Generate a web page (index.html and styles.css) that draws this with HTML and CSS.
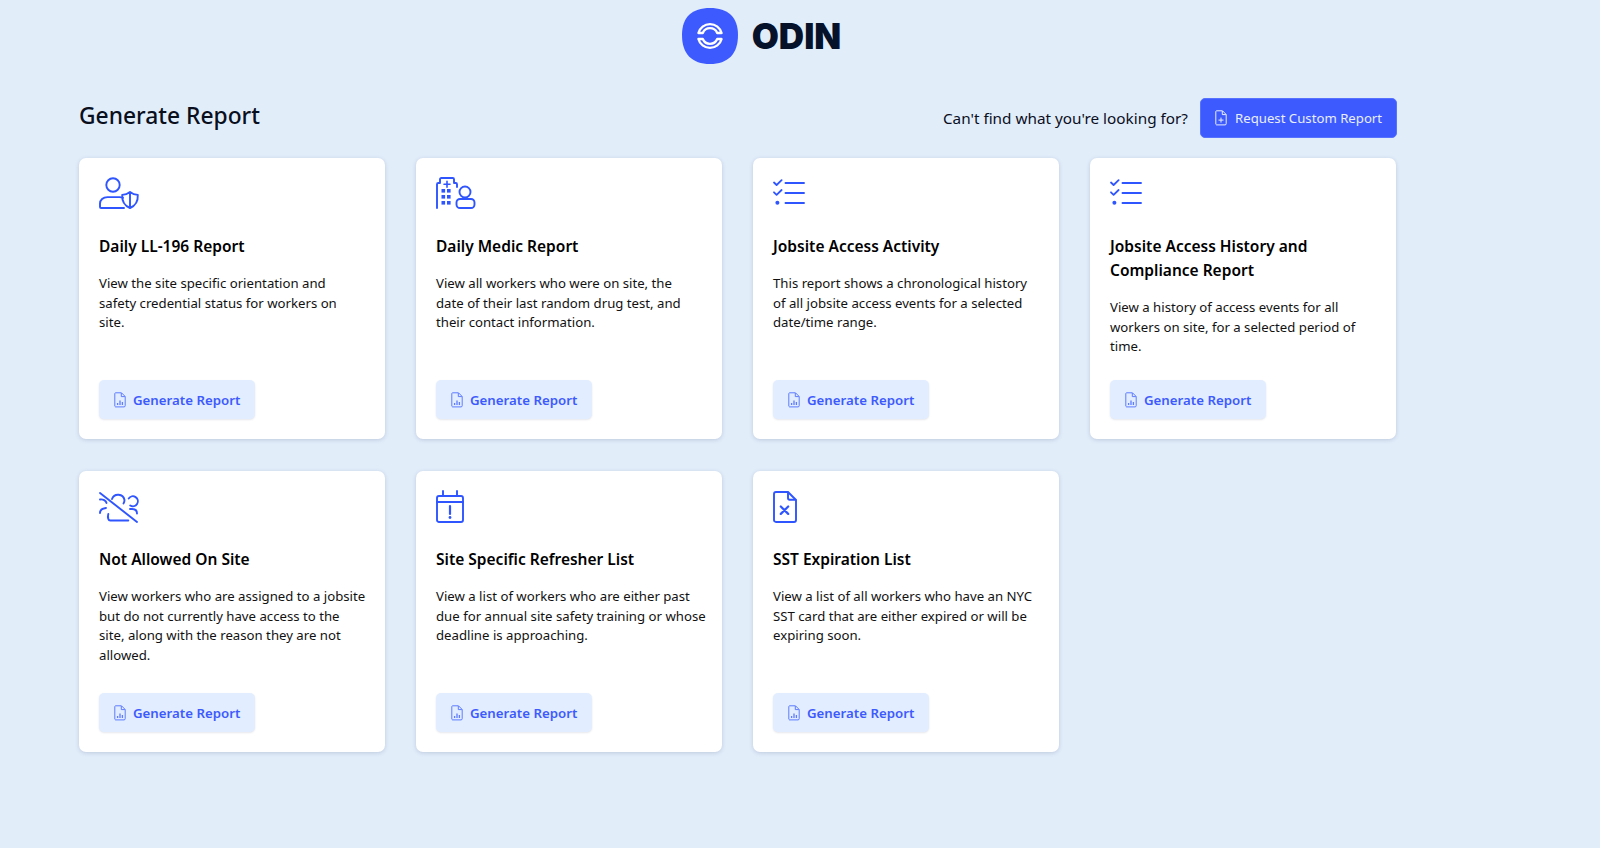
FILE: index.html
```html
<!DOCTYPE html>
<html lang="en">
<head>
<meta charset="utf-8">
<title>ODIN - Generate Report</title>
<link rel="stylesheet" href="styles.css">
</head>
<body>
<svg class="defs" width="0" height="0" aria-hidden="true">
  <defs>
    <symbol id="doc" viewBox="0 0 12 16">
      <path d="M1.500.8h6l3.700 3.700v9.200a1.200 1.200 0 0 1-1.200 1.200H1.500A1.200 1.200 0 0 1 .8 14V1.500c0-.4.3-.7.7-.7Z" fill="none" stroke="currentColor" stroke-width="1"/>
      <path d="M7.300 1v3.600h3.600" fill="none" stroke="currentColor" stroke-width="1"/>
      <path d="M3.600 13v-2M6 13V8.500M8.400 13v-3" fill="none" stroke="currentColor" stroke-width="1.300"/>
    </symbol>
    <symbol id="checks" viewBox="0 0 34 26">
      <g fill="none" stroke="#2f55ff" stroke-width="1.800" stroke-linecap="round" stroke-linejoin="round">
        <path d="M1 3.500 3.600 6 8.600 1.200M1 13.300l2.600 2.500 5-4.800"/>
        <path d="M12.500 4h18.500M12.500 14h18.500M12.500 24h18.500" stroke-width="1.900"/>
      </g>
      <circle cx="4.400" cy="23.800" r="2" fill="#2f55ff"/>
    </symbol>
  </defs>
</svg>

<header class="brand">
  <svg class="logo" viewBox="0 0 56 56" aria-hidden="true">
    <path d="M28 0C46 0 56 9 56 27C56 46 46 56 28 56C10 56 0 46 0 27C0 9 10 0 28 0Z" fill="#3d5afe"/>
    <g fill="none" stroke="#fff" stroke-width="2.300" stroke-linejoin="round">
      <path d="M16.400 25A12 12 0 0 1 39.600 25H35.200A7.800 7.800 0 0 0 20.800 25Z"/>
      <path d="M16.400 31A12 12 0 0 0 39.600 31H35.200A7.800 7.800 0 0 1 20.800 31Z"/>
    </g>
  </svg>
  <span class="wordmark">ODIN</span>
</header>

<main class="content">
  <div class="toolbar">
    <h1 class="page-title">Generate Report</h1>
    <div class="request">
      <span class="request-label">Can't find what you're looking for?</span>
      <button class="btn-primary" type="button">
        <svg class="btn-icon-lg" viewBox="0 0 12 16" aria-hidden="true">
          <path d="M1.500.8h6l3.700 3.700v9.200a1.200 1.200 0 0 1-1.200 1.200H1.500A1.200 1.200 0 0 1 .8 14V1.500c0-.4.3-.7.7-.7Z" fill="none" stroke="currentColor"/>
          <path d="M7.300 1v3.600h3.600M6 7.600v5M3.500 10.100h5" fill="none" stroke="currentColor"/>
        </svg>
        Request Custom Report
      </button>
    </div>
  </div>

  <section class="grid">
    <article class="card">
      <svg class="card-icon" viewBox="0 0 42 34" aria-hidden="true">
        <g fill="none" stroke="#2f55ff" stroke-width="1.900" stroke-linejoin="round" stroke-linecap="round">
          <circle cx="14" cy="8" r="6.700"/>
          <path d="M24 20.800c-1-.5-2.200-.7-3.500-.7H8.500C4 20.100 1 23 1 26.500v3.500c0 .6.400 1 1 1h23"/>
          <path d="M31 15c2.300 1.800 4.800 2.700 7.800 2.900.3 6-1.900 10.700-7.800 13.100-5.900-2.400-8.100-7.100-7.800-13.100 3-.2 5.500-1.100 7.800-2.900ZM31 15.500v15"/>
        </g>
      </svg>
      <h2 class="card-title">Daily LL-196 Report</h2>
      <p class="card-text">View the site specific orientation and<br>safety credential status for workers on<br>site.</p>
      <button class="btn-soft" type="button"><svg class="btn-icon"><use href="#doc"/></svg>Generate Report</button>
    </article>

    <article class="card">
      <svg class="card-icon" viewBox="0 0 42 34" aria-hidden="true">
        <g fill="none" stroke="#2f55ff" stroke-width="1.900" stroke-linejoin="round" stroke-linecap="round">
          <path d="M1 31V7.300C1 6.500 1.500 6 2.300 6H4V2.300C4 1.500 4.500 1 5.300 1h11.400c.8 0 1.300.5 1.300 1.300V6h1.700c.8 0 1.300.5 1.300 1.300V10"/>
          <path d="M11 4.200v6M8 7.200h6" stroke-width="1.600"/>
          <circle cx="29" cy="15" r="5.500"/>
          <rect x="20.500" y="22" width="18" height="9" rx="3.500"/>
        </g>
        <g fill="#2f55ff">
          <rect x="5.500" y="12" width="3.600" height="3.600"/><rect x="11" y="12" width="3.600" height="3.600"/>
          <rect x="5.500" y="18" width="3.600" height="3.600"/><rect x="11" y="18" width="3.600" height="3.600"/>
          <rect x="5.500" y="24" width="3.600" height="3.600"/><rect x="11" y="24" width="3.600" height="3.600"/>
        </g>
      </svg>
      <h2 class="card-title">Daily Medic Report</h2>
      <p class="card-text">View all workers who were on site, the<br>date of their last random drug test, and<br>their contact information.</p>
      <button class="btn-soft" type="button"><svg class="btn-icon"><use href="#doc"/></svg>Generate Report</button>
    </article>

    <article class="card">
      <svg class="card-icon-list"><use href="#checks"/></svg>
      <h2 class="card-title">Jobsite Access Activity</h2>
      <p class="card-text">This report shows a chronological history<br>of all jobsite access events for a selected<br>date/time range.</p>
      <button class="btn-soft" type="button"><svg class="btn-icon"><use href="#doc"/></svg>Generate Report</button>
    </article>

    <article class="card">
      <svg class="card-icon-list"><use href="#checks"/></svg>
      <h2 class="card-title">Jobsite Access History and Compliance Report</h2>
      <p class="card-text">View a history of access events for all<br>workers on site, for a selected period of<br>time.</p>
      <button class="btn-soft" type="button"><svg class="btn-icon"><use href="#doc"/></svg>Generate Report</button>
    </article>

    <article class="card">
      <svg class="card-icon" viewBox="0 0 42 34" aria-hidden="true">
        <g fill="none" stroke="#2f55ff" stroke-width="1.900" stroke-linecap="round" stroke-linejoin="round">
          <path d="M1 3l37 29"/>
          <path d="M13 9a6.500 6.500 0 0 1 12.500 1c0 1.500-.3 2.500-1 3.500"/>
          <path d="M29.700 8.500a5 5 0 1 1 1.500 7"/>
          <path d="M31 19h2c3 0 5 1.800 5 4.500"/>
          <path d="M1 9.500c3-.5 6 1 6.500 3.500"/>
          <path d="M1 23c0-2.500 2-4.500 6-5"/>
          <path d="M9.300 24c-.3 1-.3 4 0 5 .3 1 1 1.500 2 1.500h18"/>
        </g>
      </svg>
      <h2 class="card-title">Not Allowed On Site</h2>
      <p class="card-text">View workers who are assigned to a jobsite<br>but do not currently have access to the<br>site, along with the reason they are not<br>allowed.</p>
      <button class="btn-soft" type="button"><svg class="btn-icon"><use href="#doc"/></svg>Generate Report</button>
    </article>

    <article class="card">
      <svg class="card-icon" viewBox="0 0 42 34" aria-hidden="true">
        <g fill="none" stroke="#2f55ff" stroke-width="1.900" stroke-linecap="round" stroke-linejoin="round">
          <rect x="1" y="6" width="26" height="26" rx="2"/>
          <path d="M1 12h26M7 1v5M21 1v5"/>
          <path d="M14 16v8" stroke-width="2.200"/>
        </g>
        <circle cx="14" cy="27.500" r="1.400" fill="#2f55ff"/>
      </svg>
      <h2 class="card-title">Site Specific Refresher List</h2>
      <p class="card-text">View a list of workers who are either past<br>due for annual site safety training or whose<br>deadline is approaching.</p>
      <button class="btn-soft" type="button"><svg class="btn-icon"><use href="#doc"/></svg>Generate Report</button>
    </article>

    <article class="card">
      <svg class="card-icon" viewBox="0 0 42 34" aria-hidden="true">
        <g fill="none" stroke="#2f55ff" stroke-width="1.900" stroke-linecap="round" stroke-linejoin="round">
          <path d="M3 2h12l8 8v20c0 1.200-.8 2-2 2H3c-1.200 0-2-.8-2-2V4c0-1.200.8-2 2-2Z"/>
          <path d="M15 2.500V8c0 1 .7 1.700 1.700 1.700h5.800"/>
          <path d="M7.800 16.500l7.400 7.400M15.200 16.500l-7.400 7.400" stroke-width="2.200"/>
        </g>
      </svg>
      <h2 class="card-title">SST Expiration List</h2>
      <p class="card-text">View a list of all workers who have an NYC<br>SST card that are either expired or will be<br>expiring soon.</p>
      <button class="btn-soft" type="button"><svg class="btn-icon"><use href="#doc"/></svg>Generate Report</button>
    </article>
  </section>
</main>
</body>
</html>
```

FILE: styles.css
```css
* { box-sizing: border-box; }
html, body { margin: 0; height: 100%; }
body {
  background: #e2edfa;
  color: #0a0f1e;
  font-family: "Noto Sans", Roboto, sans-serif;
  overflow: hidden;
}
.defs { display: block; height: 0; }

.brand {
  display: flex;
  align-items: center;
  justify-content: center;
  gap: 14px;
  height: 72px;
  padding: 0 77px 0 0;
}
.logo { width: 56px; height: 56px; display: block; }
.wordmark {
  font-family: Inter, "Liberation Sans", sans-serif;
  font-weight: 900;
  font-size: 35px;
  color: #06112a;
}

.content { padding: 0 0 0 79px; width: 1397px; }

.toolbar {
  display: flex;
  align-items: flex-start;
  justify-content: space-between;
  height: 86px;
  padding-top: 26px;
}
.page-title {
  margin: 2px 0 0;
  font-size: 22.800px;
  line-height: 32px;
  font-weight: 500;
}
.request { display: flex; align-items: center; gap: 12px; }
.request-label { font-size: 15.300px; }
.btn-primary {
  display: flex;
  align-items: center;
  gap: 8px;
  height: 40px;
  width: 197px;
  padding: 0 0 0 14px;
  background: #3d5afe;
  color: #e9eeff;
  border: 1px solid #5672ff;
  border-radius: 5px;
  font: 13.200px "Noto Sans", Roboto, sans-serif;
}
.btn-icon-lg { width: 12px; height: 16px; flex: none; }

.grid {
  display: grid;
  grid-template-columns: repeat(4, 306px);
  grid-auto-rows: 281px;
  column-gap: 31px;
  row-gap: 32px;
}
.card {
  display: flex;
  flex-direction: column;
  align-items: flex-start;
  padding: 19px 20px 20px;
  background: #fff;
  border-radius: 7px;
  box-shadow: 0 1px 4px rgba(40, 60, 110, 0.2);
}
.card-icon { width: 42px; height: 34px; flex: none; }
.card-icon-list { width: 34px; height: 26px; margin: 2px 0 6px; flex: none; }
.card-title {
  margin: 23px 0 0;
  font-size: 15.500px;
  line-height: 24px;
  font-weight: 600;
  color: #000;
}
.card-text {
  margin: 16px 0 0;
  font-size: 13.200px;
  line-height: 19.600px;
  color: #111;
  white-space: nowrap;
}
.btn-soft {
  display: flex;
  align-items: center;
  gap: 7px;
  margin-top: auto;
  width: 156px;
  height: 39px;
  padding: 0 0 0 15px;
  background: #e2eeff;
  color: #3d5afe;
  border: 0;
  border-radius: 5px;
  font: 600 13.250px "Noto Sans", Roboto, sans-serif;
  box-shadow: 0 1px 2px rgba(40, 60, 110, 0.12);
}
.btn-icon { width: 12px; height: 16px; flex: none; color: #5f7bff; }
```
